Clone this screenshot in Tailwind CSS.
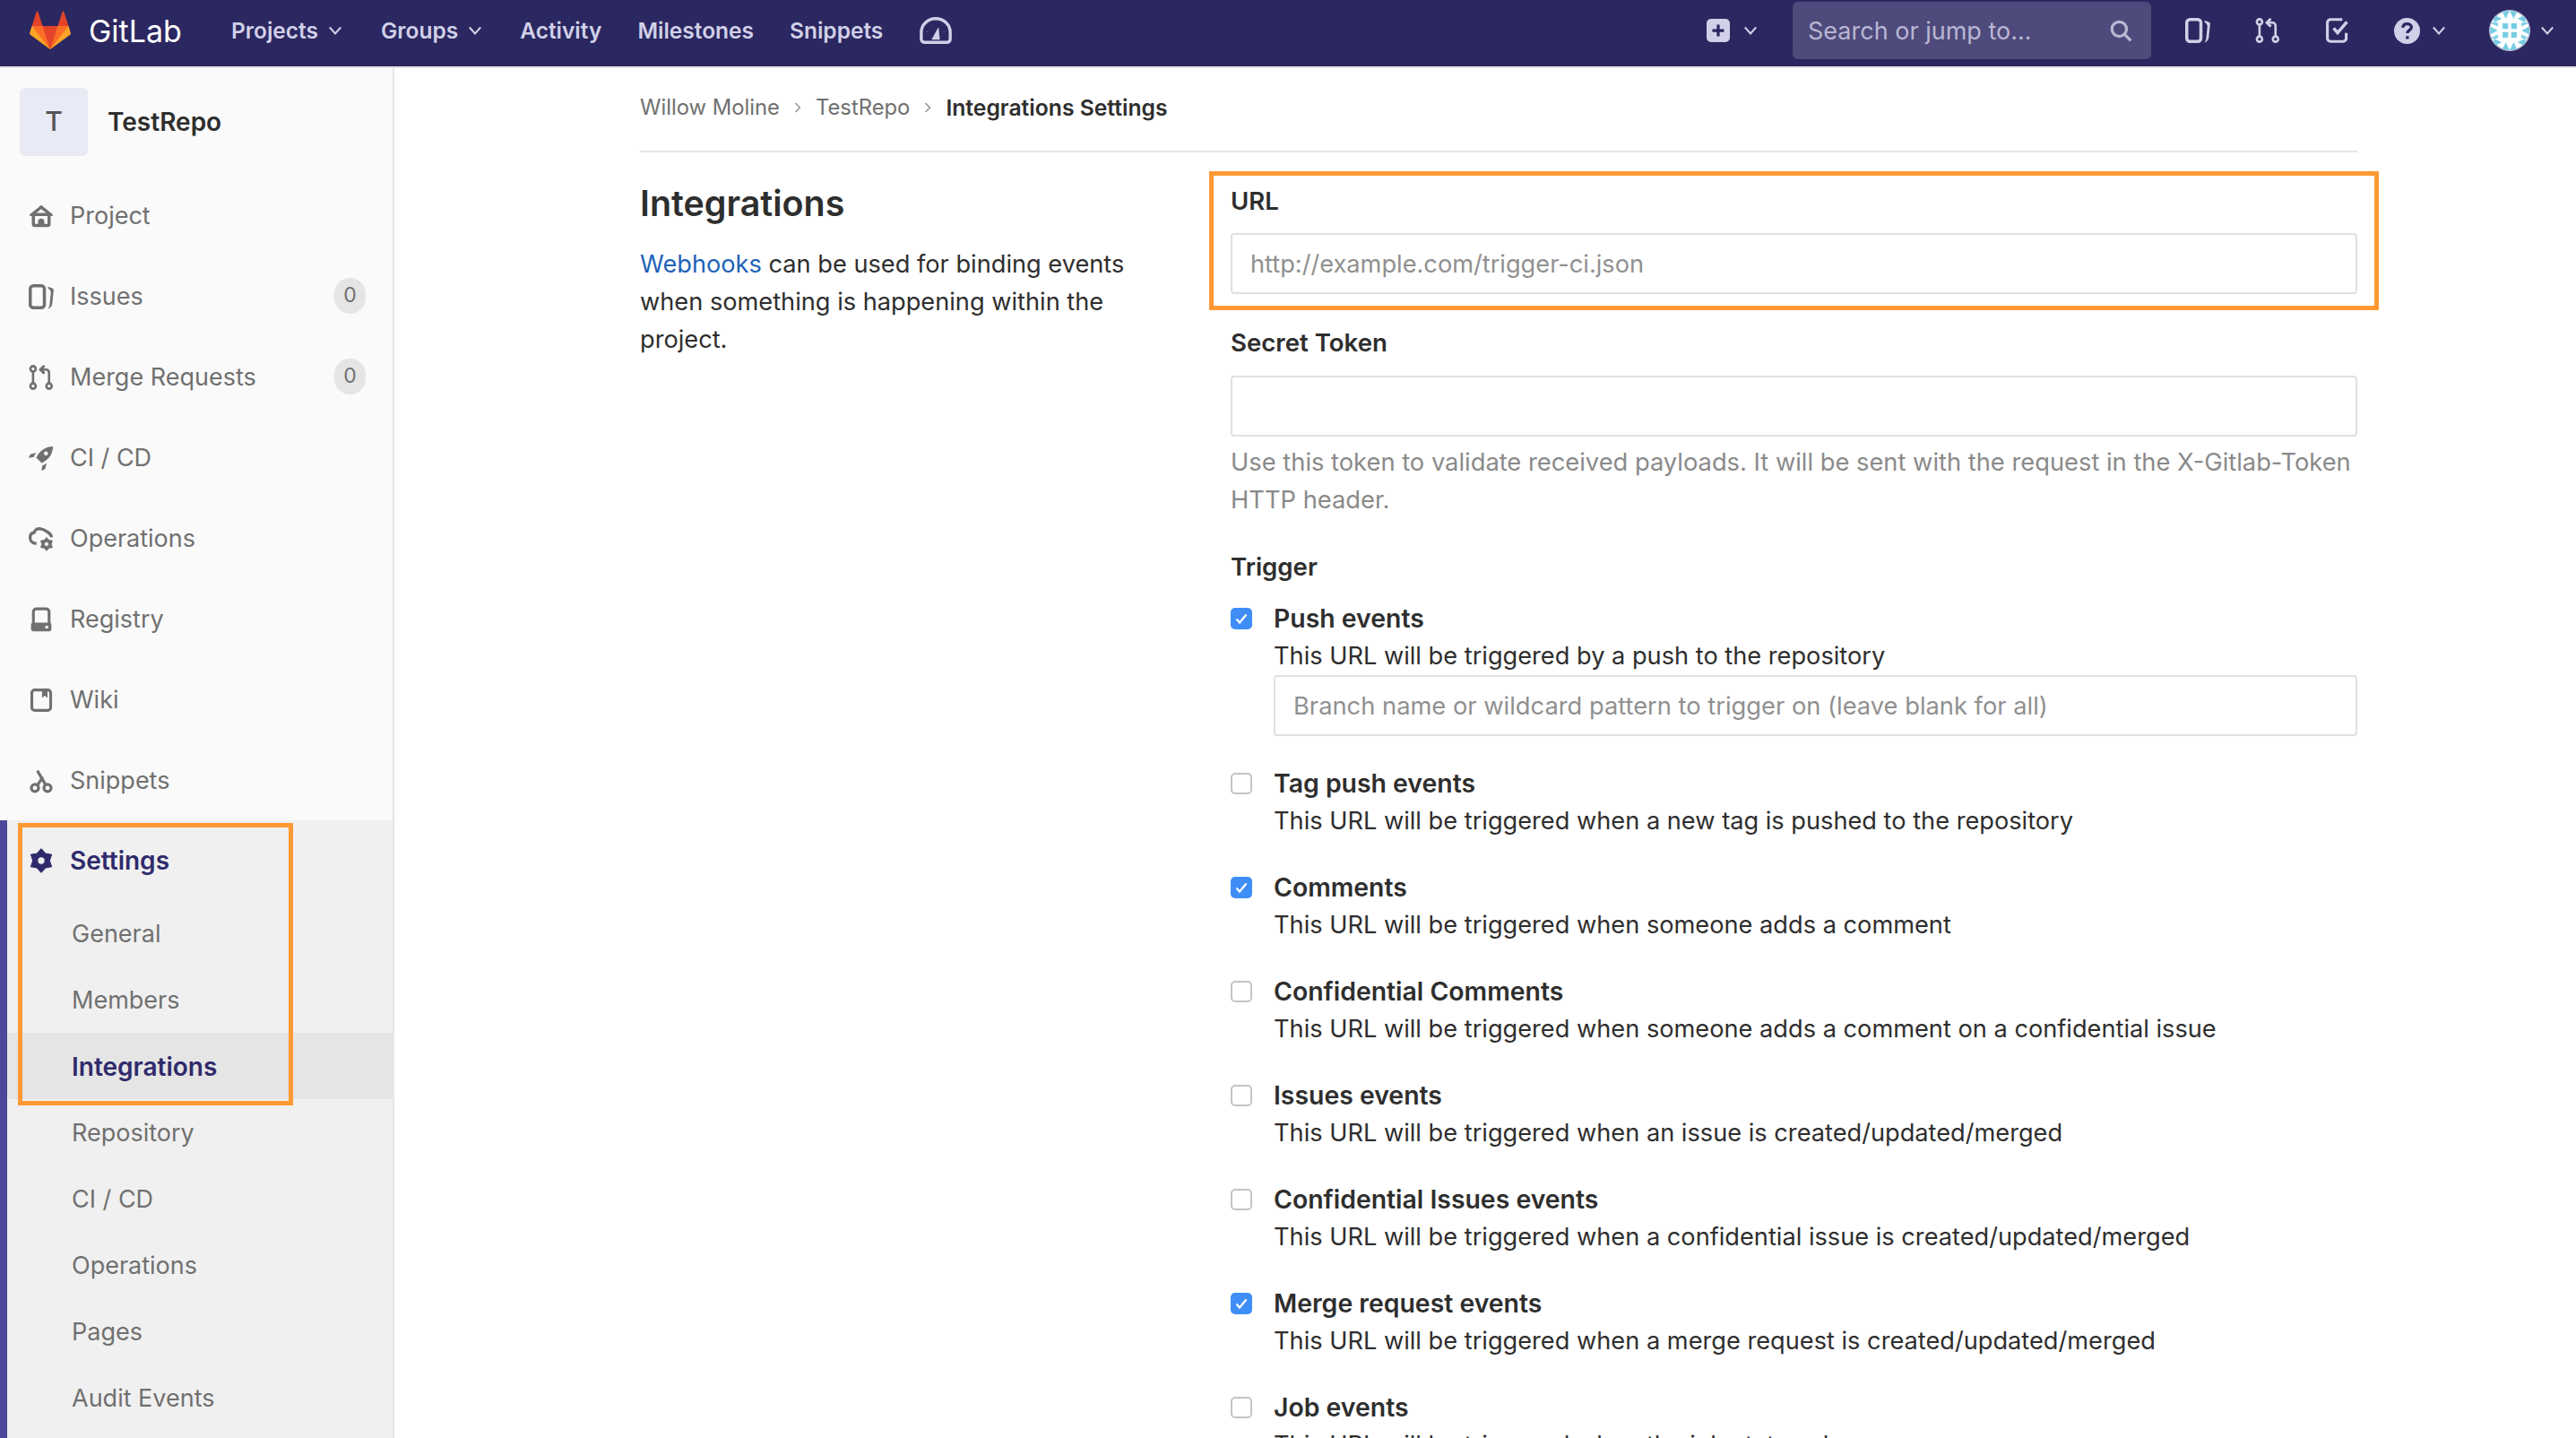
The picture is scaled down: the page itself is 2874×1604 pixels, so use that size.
<!DOCTYPE html>
<html lang="en">
<head>
    <meta charset="UTF-8">
    <title>Integrations Settings</title>
    <script src="https://cdn.jsdelivr.net/npm/@tailwindcss/browser@4"></script>
</head>
<body class="bg-white [font-family:Inter,sans-serif] text-[#2e2e2e]">
<svg class="hidden">
    <symbol id="chev" viewBox="0 0 16 16"><path d="M3.500 5.500 8 10.500l4.500-5" fill="none" stroke="currentColor" stroke-width="1.500"/></symbol>
    <symbol id="issues" viewBox="0 0 16 16"><path fill="currentColor" fill-rule="evenodd" d="M3 0h5a3 3 0 0 1 3 3v10a3 3 0 0 1-3 3H3a3 3 0 0 1-3-3V3a3 3 0 0 1 3-3zm0 2a1 1 0 0 0-1 1v10a1 1 0 0 0 1 1h5a1 1 0 0 0 1-1V3a1 1 0 0 0-1-1z"/><path fill="currentColor" d="M12.300 1.600 15 2.600c.7.3 1 .8.9 1.500l-.9 8.600c-.1 1-1.300 2.600-2.700 3 .6-.9 1-1.900 1.100-3l.7-7.200c.1-1-.5-2-1.800-2.900z"/></symbol>
    <symbol id="mr" viewBox="0 0 16 16"><g fill="none" stroke="currentColor" stroke-width="1.500"><circle cx="2.800" cy="2.500" r="1.700"/><circle cx="2.800" cy="13.500" r="1.700"/><circle cx="13" cy="13.500" r="1.700"/><path d="M2.800 4.200v7.600M13 11.800V5a2 2 0 0 0-2-2H8.500"/><path d="M10 .5 7.500 3 10 5.500" stroke-width="1.700"/></g></symbol>
    <symbol id="gear" viewBox="0 0 16 16"><path fill="currentColor" stroke="currentColor" stroke-width=".6" stroke-linejoin="round" fill-rule="evenodd" d="M8 .5 10.600 3.400 14.600 4.200 13.300 8 14.600 11.800 10.600 12.600 8 15.500 5.400 12.600 1.400 11.800 2.700 8 1.400 4.200 5.400 3.400zM10.400 8a2.400 2.400 0 1 0-4.800 0 2.400 2.400 0 1 0 4.800 0z"/></symbol>
</svg>

<div class="h-[1604px] overflow-hidden flex flex-col">
    <!-- top navbar -->
    <header class="h-[76px] shrink-0 bg-[#2b2760] border-b-2 border-[#e5e5e5] pb-[6px] flex items-center text-[#d1d0e8]">
        <svg class="w-[50px] h-[46px] ml-[31px]" viewBox="0 0 36 36"><path fill="#e24329" d="M2 14l9.380 9v-9l-4-12.280c-.205-.632-1.176-.632-1.380 0z"/><path fill="#e24329" d="M34 14l-9.380 9v-9l4-12.280c.205-.632 1.176-.632 1.380 0z"/><path fill="#e24329" d="M18 34.380 3 14h30z"/><path fill="#fc6d26" d="M18 34.380 11.380 14H2l4 11z"/><path fill="#fc6d26" d="M18 34.380 24.620 14H34l-4 11z"/><path fill="#fca326" d="M2 14 .1 20.160c-.18.565 0 1.200.5 1.560l17.400 12.660z"/><path fill="#fca326" d="M34 14l1.900 6.160c.18.565 0 1.200-.5 1.560L18 34.380z"/></svg>
        <span class="ml-[18px] text-[34px] text-white w-[159px]">GitLab</span>
        <nav class="flex items-center text-[24.5px] font-semibold">
            <span>Projects</span>
            <svg class="w-[22px] h-[22px] ml-[8px] mr-[40px]"><use href="#chev"/></svg>
            <span>Groups</span>
            <svg class="w-[22px] h-[22px] ml-[8px] mr-[39px]"><use href="#chev"/></svg>
            <span class="mr-[40px]">Activity</span>
            <span class="mr-[40px]">Milestones</span>
            <span>Snippets</span>
            <svg class="w-[38px] h-[32px] ml-[40px]" viewBox="0 0 20 16" fill="none" stroke="currentColor" stroke-width="1.800"><path d="M3.500 15h13a2 2 0 0 0 2-2V9A8.500 8 0 0 0 1.500 9v4a2 2 0 0 0 2 2z"/><path d="M7.800 13.200 11.500 6.500 12.200 13.200z" fill="currentColor" stroke-width=".4"/><path d="M5 8.500v.1M10 4v.1M15 8.500v.1" stroke-width="1.300"/></svg>
        </nav>
        <div class="ml-auto flex items-center">
            <svg class="w-[26px] h-[26px]" viewBox="0 0 16 16"><path fill="currentColor" fill-rule="evenodd" d="M3 0h10a3 3 0 0 1 3 3v10a3 3 0 0 1-3 3H3a3 3 0 0 1-3-3V3a3 3 0 0 1 3-3zm4 4v3H4v2h3v3h2V9h3V7H9V4z"/></svg>
            <svg class="w-[22px] h-[22px] ml-[12px] mr-[36px]"><use href="#chev"/></svg>
            <div class="w-[400px] h-[64px] bg-[#4e4a7b] rounded-[6px] flex items-center pl-[17px] pr-[21px] justify-between">
                <span class="text-[27px] text-[#b9b7d3] pt-[2px]">Search or jump to...</span>
                <svg class="w-[26px] h-[26px] text-[#b9b7d3]" viewBox="0 0 16 16" fill="none" stroke="currentColor" stroke-width="2"><circle cx="7" cy="7" r="5"/><path d="m10.500 10.500 4.500 4.500"/></svg>
            </div>
            <svg class="w-[28px] h-[28px] ml-[38px]"><use href="#issues"/></svg>
            <svg class="w-[28px] h-[28px] ml-[50px]"><use href="#mr"/></svg>
            <svg class="w-[28px] h-[28px] ml-[50px]" viewBox="0 0 16 16" fill="none" stroke="currentColor" stroke-width="1.800"><path d="M13.500 9.500V13a2 2 0 0 1-2 2H3.500a2 2 0 0 1-2-2V3a2 2 0 0 1 2-2H11"/><path d="M5.500 6.500 8 9.500 14 2.500" stroke-width="2"/></svg>
            <svg class="w-[29px] h-[29px] ml-[49px]" viewBox="0 0 16 16"><circle cx="8" cy="8" r="8" fill="currentColor"/><path d="M5.400 6c.1-1.500 1.200-2.300 2.700-2.300s2.600.9 2.600 2.100c0 1.700-2.500 1.800-2.500 3.600M8.200 11.200v1.800" fill="none" stroke="#2b2760" stroke-width="1.800"/></svg>
            <svg class="w-[22px] h-[22px] ml-[10px] mr-[45px]"><use href="#chev"/></svg>
            <svg class="w-[46px] h-[46px] rounded-full border border-[#c9c8e0]" viewBox="0 0 50 50"><rect width="50" height="50" fill="#fdfeff"/><g fill="#75cde3"><path d="M16 16h7v7h-7zM27 16h7v7h-7zM16 27h7v7h-7zM27 27h7v7h-7z"/><path d="M5 5l10 5-10 5zM45 5l-10 5 10 5zM5 45l10-5-10-5zM45 45l-10-5 10-5z"/><path d="M15 0l5 10 5-10zM35 0l-5 10-5-10zM15 50l5-10 5 10zM35 50l-5-10-5 10z"/><path d="M0 15l10 5 0-5zM50 15l-10 5 0-5zM0 35l10-5 0 5zM50 35l-10-5 0 5zM0 20l10 5-10 5zM50 20l-10 5 10 5z"/></g></svg>
            <svg class="w-[22px] h-[22px] ml-[8px] mr-[21px]"><use href="#chev"/></svg>
        </div>
    </header>

    <div class="flex flex-1 min-h-0">
        <!-- sidebar -->
        <aside class="relative w-[440px] shrink-0 bg-[#fafafa] border-r-2 border-[#e5e5e5] text-[27px] text-[#707070] overflow-hidden">
            <div class="h-[119px] flex items-center pl-[22px]">
                <div class="w-[76px] h-[76px] bg-[#e8eaf5] rounded-[6px] flex items-center justify-center text-[30px] font-medium text-[#555]">T</div>
                <span class="ml-[22px] text-[28px] font-semibold text-[#2e2e2e]">TestRepo</span>
            </div>
            <div class="h-[90px] flex items-center pt-[2px] pl-[32px]">
                <svg class="w-[28px] h-[28px] mr-[18px]" viewBox="0 0 16 16"><path fill="currentColor" fill-rule="evenodd" d="M8 1 .8 6.800C.3 7.200.6 8 1.300 8H2v5a2 2 0 0 0 2 2h8a2 2 0 0 0 2-2V8h.7c.7 0 1-.8.5-1.200zM8 3.500 4.800 6h6.400zM4 8v5h2v-1.500a2 2 0 0 1 4 0V13h2V8z"/></svg>
                <span>Project</span>
            </div>
            <div class="h-[90px] flex items-center pt-[2px] pl-[32px] pr-[30px]">
                <svg class="w-[28px] h-[28px] mr-[18px]"><use href="#issues"/></svg>
                <span>Issues</span>
                <span class="ml-auto w-[35px] h-[40px] -mt-[3px] rounded-full bg-[#e5e5e5] flex items-center justify-center text-[23px]">0</span>
            </div>
            <div class="h-[90px] flex items-center pt-[2px] pl-[32px] pr-[30px]">
                <svg class="w-[28px] h-[28px] mr-[18px]"><use href="#mr"/></svg>
                <span>Merge Requests</span>
                <span class="ml-auto w-[35px] h-[40px] -mt-[3px] rounded-full bg-[#e5e5e5] flex items-center justify-center text-[23px]">0</span>
            </div>
            <div class="h-[90px] flex items-center pt-[2px] pl-[32px]">
                <svg class="w-[28px] h-[28px] mr-[18px]" viewBox="0 0 16 16"><path fill="currentColor" fill-rule="evenodd" d="M15.500.5C11 .7 7.500 2.500 4.800 7.700l3.500 3.500C13.500 8.500 15.300 5 15.500.5zM11 3.700a1.300 1.300 0 1 0 0 2.600 1.300 1.300 0 0 0 0-2.600z"/><path fill="currentColor" d="M3.800 4.800 1 5.500 0 7.800l3.300-.5c.3-1 .6-1.800 1.700-2.800zM11.200 12.200 10.500 15l-2.300 1 .5-3.300c1-.3 1.800-.7 2.800-1.700z"/></svg>
                <span>CI / CD</span>
            </div>
            <div class="h-[90px] flex items-center pt-[2px] pl-[32px]">
                <svg class="w-[28px] h-[28px] mr-[18px]" viewBox="0 0 16 16"><path d="M5 11C2 11 .9 9 .9 7.300.9 5.500 2 4.200 3.500 4 4 2.500 5.500 1.500 7 1.500 9.500 1.800 11 3 12.500 4c1.500 1 2 2 2 3" fill="none" stroke="currentColor" stroke-width="1.900"/><svg x="6.800" y="6.800" width="9.200" height="9.200"><use href="#gear"/></svg></svg>
                <span>Operations</span>
            </div>
            <div class="h-[90px] flex items-center pt-[2px] pl-[32px]">
                <svg class="w-[28px] h-[28px] mr-[18px]" viewBox="0 0 16 16"><path d="M3 10.500V3a1.800 1.800 0 0 1 1.800-1.800h6.400A1.800 1.800 0 0 1 13 3v7.500" fill="none" stroke="currentColor" stroke-width="1.800"/><path fill="currentColor" fill-rule="evenodd" d="M3 10h10a1.500 1.500 0 0 1 1.500 1.500V14a1.500 1.500 0 0 1-1.500 1.500H3A1.500 1.500 0 0 1 1.500 14v-2.500A1.500 1.500 0 0 1 3 10zm8.500 1.800a1 1 0 1 0 0 2 1 1 0 0 0 0-2z"/></svg>
                <span>Registry</span>
            </div>
            <div class="h-[90px] flex items-center pt-[2px] pl-[32px]">
                <svg class="w-[28px] h-[28px] mr-[18px]" viewBox="0 0 16 16"><rect x="2" y="1.500" width="12" height="13" rx="1.800" fill="none" stroke="currentColor" stroke-width="1.800"/><path fill="currentColor" d="M8.500 1.500h3.500v5L10.200 5.200 8.500 6.500z"/></svg>
                <span>Wiki</span>
            </div>
            <div class="h-[90px] flex items-center pt-[2px] pl-[32px]">
                <svg class="w-[28px] h-[28px] mr-[18px]" viewBox="0 0 16 16" fill="none" stroke="currentColor" stroke-width="1.800"><circle cx="4" cy="12.500" r="2.300"/><circle cx="12" cy="12.500" r="2.300"/><path d="M10.800 10.500 5.500 1.500M5.800 10.500l3.200-5"/></svg>
                <span>Snippets</span>
            </div>
            <div class="bg-[#f0f0f0] border-l-[8px] border-[#4b4899] h-[700px]">
                <div class="h-[89px] flex items-center pl-[24px] text-[28px] font-semibold text-[#2f2a6b]">
                    <svg class="w-[28px] h-[28px] mr-[18px]"><use href="#gear"/></svg>
                    <span>Settings</span>
                </div>
                <div class="h-[74px] flex items-center pt-[2px] pl-[72px]">General</div>
                <div class="h-[74px] flex items-center pt-[2px] pl-[72px]">Members</div>
                <div class="h-[74px] flex items-center pt-[2px] pl-[72px] bg-[#e5e5e5] text-[28px] font-semibold text-[#2f2a6b]">Integrations</div>
                <div class="h-[74px] flex items-center pt-[2px] pl-[72px]">Repository</div>
                <div class="h-[74px] flex items-center pt-[2px] pl-[72px]">CI / CD</div>
                <div class="h-[74px] flex items-center pt-[2px] pl-[72px]">Operations</div>
                <div class="h-[74px] flex items-center pt-[2px] pl-[72px]">Pages</div>
                <div class="h-[74px] flex items-center pt-[2px] pl-[72px]">Audit Events</div>
            </div>
            <!-- annotation box over the settings menu -->
            <div class="absolute left-[20px] top-[842px] w-[307px] h-[315px] border-[5px] border-[#ff9933]"></div>
        </aside>

        <!-- page content -->
        <main class="w-[1916px] ml-[274px] text-[27.2px] leading-[42px]">
            <div class="h-[94px] border-b-2 border-[#e5e5e5] flex items-center pb-[4px] text-[23.8px]">
                <span class="text-[#707070]">Willow Moline</span>
                <svg class="w-[16px] h-[16px] mx-[12px] text-[#8e8e8e]" viewBox="0 0 16 16"><path d="m5.500 3 5 5-5 5" fill="none" stroke="currentColor" stroke-width="1.400"/></svg>
                <span class="text-[#707070]">TestRepo</span>
                <svg class="w-[16px] h-[16px] mx-[12px] text-[#8e8e8e]" viewBox="0 0 16 16"><path d="m5.500 3 5 5-5 5" fill="none" stroke="currentColor" stroke-width="1.400"/></svg>
                <span class="text-[24.7px] font-semibold">Integrations Settings</span>
            </div>
            <div class="flex">
                <div class="w-[659px] shrink-0">
                    <h4 class="text-[39.4px] leading-[50px] font-semibold mt-[32px]">Integrations</h4>
                    <p class="w-[590px] mt-[22px]"><span class="text-[#1f62b8]">Webhooks</span> can be used for binding events when something is happening within the project.</p>
                </div>
                <div class="flex-1 min-w-0 pt-[21px]">
                    <div class="-mx-[24px] px-[19px] h-[155px] border-[5px] border-[#ff9933]">
                        <div class="text-[27.6px] font-semibold pt-[7px]">URL</div>
                        <input class="mt-[15px] w-full h-[68px] px-[20px] border-2 border-[#e0e0e0] rounded-[4px] placeholder:text-[#909090]" placeholder="http://example.com/trigger-ci.json">
                    </div>
                    <div class="text-[27.6px] font-semibold mt-[15px]">Secret Token</div>
                    <div class="mt-[16px] h-[68px] border-2 border-[#e0e0e0] rounded-[4px]"></div>
                    <p class="mt-[8px] text-[27.3px] text-[#8a8a8a]">Use this token to validate received payloads. It will be sent with the request in the X-Gitlab-Token HTTP header.</p>
                    <div class="text-[27.6px] font-semibold mt-[32px]">Trigger</div>
                    <div class="mt-[16px] flex">
                        <div class="w-[24px] h-[24px] mt-[9px] mr-[24px] shrink-0 rounded-[5px] bg-[#3f8ef7] flex items-center justify-center"><svg class="w-[16px] h-[16px]" viewBox="0 0 16 16"><path d="m2.500 8.500 3.500 4 7.500-9" fill="none" stroke="#fff" stroke-width="2.200"/></svg></div>
                        <div class="flex-1 min-w-0">
                            <div class="text-[28.4px] font-semibold">Push events</div>
                            <div>This URL will be triggered by a push to the repository</div>
                            <input class="w-full h-[68px] px-[20px] border-2 border-[#e0e0e0] rounded-[4px] text-[27.3px] placeholder:text-[#909090]" placeholder="Branch name or wildcard pattern to trigger on (leave blank for all)">
                        </div>
                    </div>
                    <div class="mt-[32px] flex">
                        <div class="w-[24px] h-[24px] mt-[9px] mr-[24px] shrink-0 rounded-[5px] bg-white border-2 border-[#c4c4c4]"></div>
                        <div><div class="text-[28.4px] font-semibold">Tag push events</div><div>This URL will be triggered when a new tag is pushed to the repository</div></div>
                    </div>
                    <div class="mt-[32px] flex">
                        <div class="w-[24px] h-[24px] mt-[9px] mr-[24px] shrink-0 rounded-[5px] bg-[#3f8ef7] flex items-center justify-center"><svg class="w-[16px] h-[16px]" viewBox="0 0 16 16"><path d="m2.500 8.500 3.500 4 7.500-9" fill="none" stroke="#fff" stroke-width="2.200"/></svg></div>
                        <div><div class="text-[28.4px] font-semibold">Comments</div><div>This URL will be triggered when someone adds a comment</div></div>
                    </div>
                    <div class="mt-[32px] flex">
                        <div class="w-[24px] h-[24px] mt-[9px] mr-[24px] shrink-0 rounded-[5px] bg-white border-2 border-[#c4c4c4]"></div>
                        <div><div class="text-[28.4px] font-semibold">Confidential Comments</div><div>This URL will be triggered when someone adds a comment on a confidential issue</div></div>
                    </div>
                    <div class="mt-[32px] flex">
                        <div class="w-[24px] h-[24px] mt-[9px] mr-[24px] shrink-0 rounded-[5px] bg-white border-2 border-[#c4c4c4]"></div>
                        <div><div class="text-[28.4px] font-semibold">Issues events</div><div>This URL will be triggered when an issue is created/updated/merged</div></div>
                    </div>
                    <div class="mt-[32px] flex">
                        <div class="w-[24px] h-[24px] mt-[9px] mr-[24px] shrink-0 rounded-[5px] bg-white border-2 border-[#c4c4c4]"></div>
                        <div><div class="text-[28.4px] font-semibold">Confidential Issues events</div><div>This URL will be triggered when a confidential issue is created/updated/merged</div></div>
                    </div>
                    <div class="mt-[32px] flex">
                        <div class="w-[24px] h-[24px] mt-[9px] mr-[24px] shrink-0 rounded-[5px] bg-[#3f8ef7] flex items-center justify-center"><svg class="w-[16px] h-[16px]" viewBox="0 0 16 16"><path d="m2.500 8.500 3.500 4 7.500-9" fill="none" stroke="#fff" stroke-width="2.200"/></svg></div>
                        <div><div class="text-[28.4px] font-semibold">Merge request events</div><div>This URL will be triggered when a merge request is created/updated/merged</div></div>
                    </div>
                    <div class="mt-[32px] flex">
                        <div class="w-[24px] h-[24px] mt-[9px] mr-[24px] shrink-0 rounded-[5px] bg-white border-2 border-[#c4c4c4]"></div>
                        <div><div class="text-[28.4px] font-semibold">Job events</div><div>This URL will be triggered when the job status changes</div></div>
                    </div>
                </div>
            </div>
        </main>
    </div>
</div>
</body>
</html>
